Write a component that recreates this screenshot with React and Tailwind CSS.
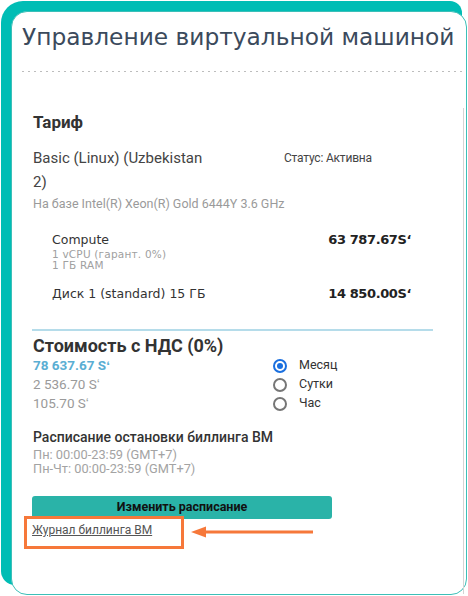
const roboto = "font-['Roboto','Liberation_Sans',sans-serif]"
const verdana = "font-['DejaVu_Sans','Verdana',sans-serif]"

function Radio({ checked, label }) {
  return (
    <div className="flex items-center h-[19px]">
      {checked ? (
        <span className="w-[14px] h-[14px] rounded-full border-2 border-[#1a6fdf] flex items-center justify-center">
          <span className="w-[6px] h-[6px] rounded-full bg-[#1a6fdf]" />
        </span>
      ) : (
        <span className="w-[14px] h-[14px] rounded-full border-2 border-[#767676]" />
      )}
      <span className="ml-[12px] text-[12.5px] text-[#333]">{label}</span>
    </div>
  )
}

function PriceRow({ title, sub, price }) {
  return (
    <div className={`flex w-[359px] justify-between ${verdana}`}>
      <div>
        <div className="text-[12.5px] leading-[18px] text-[#333]">{title}</div>
        {sub && sub.map(s => (
          <div key={s} className="text-[10.5px] leading-[11px] text-[#a0a0a0] tracking-[0.2px]">{s}</div>
        ))}
      </div>
      <div className="text-[13px] leading-[18px] font-bold text-[#222] tracking-[-0.4px]">{price}</div>
    </div>
  )
}

export default function App() {
  return (
    <div className={`w-[468px] h-[596px] bg-white relative overflow-hidden ${roboto}`}>
      <div className="ml-[1px] mt-[1px] w-[461px] h-[584px] bg-[#00bdb5] rounded-tl-[22px] rounded-tr-[12px] rounded-bl-[14px] pt-[10px] pl-[10px]">
        <div className="w-[456px] h-[584px] bg-white rounded-[16px] border border-[#3cbfb8] flex flex-col">
          <div className={`pl-[10px] pt-[9px] text-[23.3px] leading-[32px] text-[#3b4a5c] whitespace-nowrap ${verdana}`}>
            Управление виртуальной машиной
          </div>
          <div className="ml-[10px] mr-[3px] mt-[18px] h-px bg-[repeating-linear-gradient(to_right,#bdbdbd_0_2px,transparent_2px_6px)]" />

          <div className="flex-1 mt-[36px] mr-[2px] border-r border-[#d4d4d4] pl-[21px] pt-[2px]">
            <div className="text-[17px] leading-[24px] font-bold text-[#333]">Тариф</div>

            <div className="flex mt-[12px]">
              <div className="w-[251px]">
                <div className="w-[178px] text-[15px] leading-[24px] text-[#444]">
                  Basic (Linux) (Uzbekistan 2)
                </div>
              </div>
              <div className="text-[12px] leading-[24px] text-[#444] tracking-[-0.2px]">Статус: Активна</div>
            </div>
            <div className="mt-[2px] text-[12.5px] leading-[16px] text-[#9a9a9a]">
              На базе Intel(R) Xeon(R) Gold 6444Y 3.6 GHz
            </div>

            <div className="pl-[19px] mt-[19px] flex flex-col gap-[14px]">
              <PriceRow title="Compute" sub={['1 vCPU (гарант. 0%)', '1 ГБ RAM']} price="63 787.67Sʻ" />
              <PriceRow title="Диск 1 (standard) 15 ГБ" price="14 850.00Sʻ" />
            </div>

            <div className="mt-[26px] -ml-px w-[401px] h-[2px] bg-[#b5dcea]" />

            <div className="mt-[5px] text-[18px] leading-[20px] font-bold text-[#333]">Стоимость с НДС (0%)</div>
            <div className="flex">
              <div className="w-[240px] text-[13.5px] leading-[19px]">
                <div className="font-bold text-[#5aaed3]">78 637.67 Sʻ</div>
                <div className="text-[#9a9a9a]">2 536.70 Sʻ</div>
                <div className="text-[#9a9a9a]">105.70 Sʻ</div>
              </div>
              <div className="flex flex-col">
                <Radio checked label="Месяц" />
                <Radio label="Сутки" />
                <Radio label="Час" />
              </div>
            </div>

            <div className="mt-[15px] text-[14px] leading-[18px] font-medium text-[#333]">
              Расписание остановки биллинга ВМ
            </div>
            <div className="mt-[2px] text-[12.8px] leading-[14px] text-[#a3a3a3]">
              <div>Пн: 00:00-23:59 (GMT+7)</div>
              <div>Пн-Чт: 00:00-23:59 (GMT+7)</div>
            </div>

            <button className="mt-[20px] -ml-px w-[300px] h-[23px] rounded-[3px] bg-[#2ab3a8] text-[12.5px] font-bold text-[#111] flex items-center justify-center">
              Изменить расписание
            </button>
            <a href="#" className="block mt-[3px] -ml-px text-[12px] leading-[16px] text-[#555] underline w-fit">
              Журнал биллинга ВМ
            </a>
          </div>
        </div>
      </div>

      <div className="absolute left-[24px] top-[516px] w-[160px] h-[33px] border-[3px] border-[#f6783a]" />
      <div className="absolute left-[191px] top-[526px] flex items-center">
        <svg width="122" height="12" viewBox="0 0 122 12">
          <path d="M0 6 L15 0.5 L15 11.5 Z" fill="#f6783a" />
          <rect x="13" y="4.5" width="109" height="3" fill="#f6783a" />
        </svg>
      </div>
    </div>
  )
}
